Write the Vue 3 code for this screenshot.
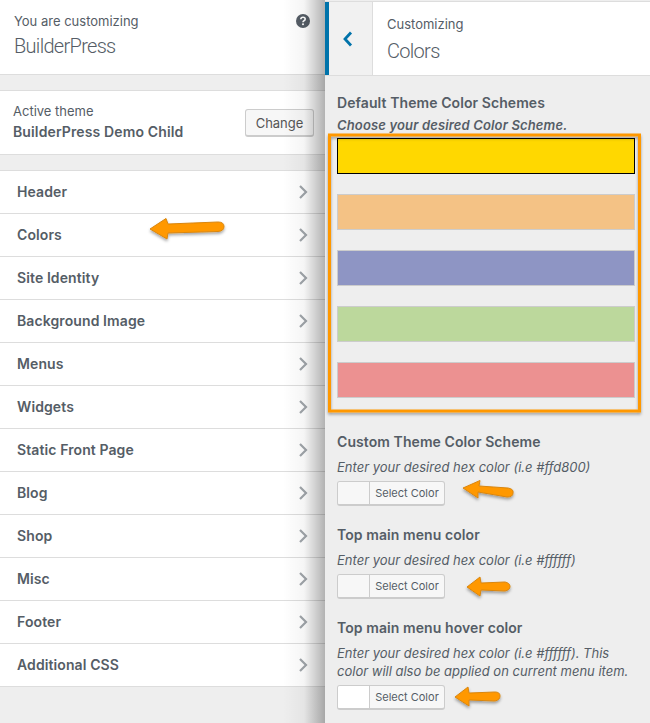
<script setup>
const items = ['Header','Colors','Site Identity','Background Image','Menus','Widgets','Static Front Page','Blog','Shop','Misc','Footer','Additional CSS']
const swatches = [
  { color: '#ffd800', cls: 'active' },
  { color: '#f4c285', cls: '' },
  { color: '#8e95c4', cls: '' },
  { color: '#bcd89c', cls: '' },
  { color: '#ec9191', cls: '' },
]
const arrows = [
  'M150 229 L166 218.5 L168 224 L218 222 Q224 222 224 226.5 Q224 231 218 231.5 L168 233 L167 239 Z',
  'M463 488 L480 480.5 L479 486 L508 488 Q514 489 513 493 Q513 497 507 497 L478 492 L478 498 Z',
  'M467 587 L480 577 L481 583 L505 582 Q510 583 510 586.5 Q510 590 505 591 L481 590 L480 596 Z',
  'M455 697 L468 687 L469 693 L495 692 Q500 692 500 696 Q500 700 495 701 L469 700 L469 706 Z',
]
</script>

<template>
  <div class="page">
    <aside class="left">
      <header class="info">
        <div class="info-text">
          <div class="small">You are customizing</div>
          <div class="title">BuilderPress</div>
        </div>
        <svg class="help" width="16" height="16" viewBox="0 0 16 16">
          <circle cx="8" cy="8" r="7" fill="#555d66" />
          <path d="M5.8 6.3 Q5.9 4.2 8 4.2 Q10.2 4.2 10.2 6 Q10.2 7.1 9 7.7 Q8 8.2 8 9.3" fill="none" stroke="#fff" stroke-width="1.6" />
          <rect x="7.1" y="10.4" width="1.8" height="1.7" fill="#fff" />
        </svg>
      </header>
      <section class="theme">
        <div class="theme-text">
          <div class="small">Active theme</div>
          <div class="theme-name">BuilderPress Demo Child</div>
        </div>
        <button class="change">Change</button>
      </section>
      <ul class="menu">
        <li v-for="item in items" :key="item">
          <span>{{ item }}</span>
          <svg width="10" height="16" viewBox="0 0 10 16"><path d="M2 2 L8 8 L2 14" fill="none" stroke="#a0a5aa" stroke-width="2.2" /></svg>
        </li>
      </ul>
      <div class="shade"></div>
    </aside>

    <main class="right">
      <header class="head">
        <div class="back">
          <svg width="12" height="16" viewBox="0 0 12 16"><path d="M9 1.5 L3 8 L9 14.5" fill="none" stroke="#0073aa" stroke-width="2.8" /></svg>
        </div>
        <div class="head-text">
          <div class="small">Customizing</div>
          <div class="title section-title">Colors</div>
        </div>
      </header>
      <div class="panel">
        <h3 class="label">Default Theme Color Schemes</h3>
        <p class="strong-desc">Choose your desired Color Scheme.</p>
        <div class="swatches">
          <div v-for="s in swatches" :key="s.color" class="swatch" :class="s.cls" :style="{ background: s.color }"></div>
        </div>
        <h3 class="label first">Custom Theme Color Scheme</h3>
        <p class="desc">Enter your desired hex color (i.e #ffd800)</p>
        <div class="picker"><i></i><span>Select Color</span></div>
        <h3 class="label next">Top main menu color</h3>
        <p class="desc">Enter your desired hex color (i.e #ffffff)</p>
        <div class="picker"><i></i><span>Select Color</span></div>
        <h3 class="label next">Top main menu hover color</h3>
        <p class="desc">Enter your desired hex color (i.e #ffffff). This color will also be applied on current menu item.</p>
        <div class="picker"><i class="white"></i><span>Select Color</span></div>
      </div>
    </main>

    <svg class="notes" width="650" height="723" viewBox="0 0 650 723">
      <defs>
        <filter id="sh" x="-20%" y="-40%" width="140%" height="200%">
          <feDropShadow dx="0" dy="2" stdDeviation="1.6" flood-color="#000" flood-opacity="0.35" />
        </filter>
      </defs>
      <rect x="329.5" y="135" width="310" height="276" fill="none" stroke="#ff9800" stroke-width="3" filter="url(#sh)" />
      <path v-for="d in arrows" :key="d" :d="d" fill="#ff9800" stroke="#d9860f" stroke-width="1" stroke-linejoin="round" filter="url(#sh)" />
    </svg>
  </div>
</template>

<style scoped>
.page {
  position: relative;
  display: flex;
  width: 650px;
  height: 723px;
  overflow: hidden;
  background: #eee;
  color: #555d66;
  font-family: Inter, "Liberation Sans", sans-serif;
  font-size: 13px;
}
.left {
  position: relative;
  flex: none;
  width: 325px;
  background: #eee;
}
.shade {
  position: absolute;
  top: 0;
  right: 0;
  bottom: 0;
  width: 42px;
  background: linear-gradient(to right, rgba(0,0,0,0), rgba(0,0,0,.04) 50%, rgba(0,0,0,.3));
  pointer-events: none;
}
.info {
  display: flex;
  justify-content: space-between;
  height: 61px;
  padding: 13px 14px 0 14px;
  background: #fff;
  border-bottom: 1px solid #ddd;
}
.small {
  font-size: 13px;
  line-height: 16px;
}
.title {
  margin-top: 4px;
  font-family: Roboto, "Liberation Sans", sans-serif;
  font-size: 20px;
  font-weight: 300;
  line-height: 26px;
  letter-spacing: -0.7px;
}
.section-title { margin-top: 6px; }
.theme {
  display: flex;
  align-items: center;
  justify-content: space-between;
  height: 63px;
  margin-top: 15px;
  padding: 0 11px 0 13px;
  background: #fff;
  border-top: 1px solid #ddd;
  border-bottom: 1px solid #ddd;
}
.theme-text { padding-bottom: 2px; }
.theme-name {
  margin-top: 5px;
  font-size: 14px;
  font-weight: 600;
  line-height: 16px;
  letter-spacing: 0.13px;
}
.change {
  width: 69px;
  height: 28px;
  margin-top: 1px;
  padding: 0;
  background: #f7f7f7;
  border: 1px solid #ccc;
  border-bottom-width: 2px;
  border-radius: 3px;
  color: #555;
  font: inherit;
}
.menu {
  margin: 15px 0 0;
  padding: 0;
  list-style: none;
  background: #fff;
  border-top: 1px solid #ddd;
}
.menu li {
  display: flex;
  align-items: center;
  justify-content: space-between;
  height: 42px;
  padding: 0 17px;
  border-bottom: 1px solid #ddd;
  font-size: 14px;
  font-weight: 600;
  letter-spacing: 0.1px;
}
.menu li span { margin-bottom: 2px; }
.right {
  flex: 1;
  min-width: 0;
  background: #eee;
}
.head {
  display: flex;
  height: 73px;
  margin-top: 1px;
  background: #fff;
  border-top: 1px solid #ddd;
  border-bottom: 1px solid #ddd;
}
.back {
  display: flex;
  align-items: center;
  justify-content: center;
  flex: none;
  box-sizing: border-box;
  width: 48px;
  padding-right: 5px;
  background: #f1f1f1;
  border-left: 4px solid #0073aa;
  border-right: 1px solid #ddd;
}
.head-text { padding: 14px 0 0 14px; }
.panel { padding: 18px 15px 0 12px; }
.label {
  margin: 0;
  font-size: 14px;
  font-weight: 600;
  line-height: 18px;
  letter-spacing: 0.08px;
}
.label.first { margin-top: 35px; }
.label.next { margin-top: 20px; }
.strong-desc, .desc {
  margin: 4px 0 0;
  font-size: 13px;
  font-style: italic;
  line-height: 18px;
}
.strong-desc { font-weight: 600; letter-spacing: 0.15px; }
.desc { margin-top: 7px; }
.swatches {
  display: flex;
  flex-direction: column;
  gap: 20px;
  margin-top: 4px;
}
.swatch {
  height: 36px;
  box-sizing: border-box;
  border: 1px solid #ccc;
}
.swatch.active { border-color: #000; }
.picker {
  display: flex;
  width: 108px;
  height: 25px;
  margin-top: 5px;
  background: #f7f7f7;
  border: 1px solid #ccc;
  border-bottom-width: 2px;
  border-radius: 3px;
  box-sizing: border-box;
  overflow: hidden;
  font-size: 11px;
}
.picker i {
  flex: none;
  width: 31px;
  background: #f7f7f7;
  border-right: 1px solid #ccc;
}
.picker i.white { background: #fff; }
.picker span {
  flex: 1;
  text-align: center;
  line-height: 22px;
}
.notes {
  position: absolute;
  top: 0;
  left: 0;
  pointer-events: none;
}
</style>
